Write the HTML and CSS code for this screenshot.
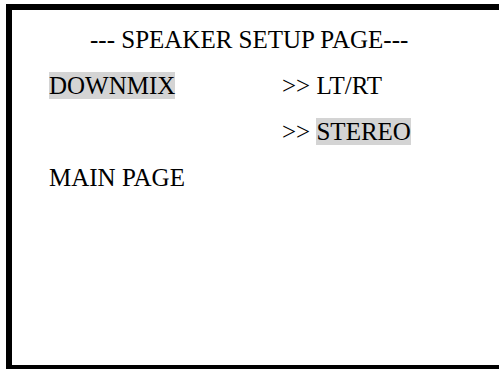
FILE: index.html
```html
<!DOCTYPE html>
<html lang="en">
<head>
    <meta charset="UTF-8">
    <meta name="viewport" content="width=device-width, initial-scale=1.0">
    <title>Speaker Setup Page</title>
    <link rel="stylesheet" href="styles.css">
</head>
<body>
    <div class="screen">
        <div class="menu">
            <div class="title">--- SPEAKER SETUP PAGE---</div>

            <div class="item"><span class="selected">DOWNMIX</span></div>
            <div class="option">&gt;&gt; LT/RT</div>

            <div class="item"></div>
            <div class="option">&gt;&gt; <span class="selected">STEREO</span></div>

            <div class="item">MAIN PAGE</div>
        </div>
    </div>
</body>
</html>
```

FILE: styles.css
```css
body {
    margin: 0;
    overflow: hidden;
    background-color: #fff;
    font-family: "Liberation Serif", "Times New Roman", serif;
    color: #000;
}

/* the OSD frame runs off the right and bottom of the window */
.screen {
    margin: 4px 0 0 6px;
    height: 365px;
    box-sizing: border-box;
    border-style: solid;
    border-color: #000;
    border-width: 6px 0 4px 6px;
    padding: 7px 0 0 37px;
}

.menu {
    display: grid;
    grid-template-columns: 233px auto;
    font-size: 25px;
    line-height: 46px;
}

.title {
    grid-column: 1 / -1;
    padding-left: 41px;
}

.item {
    grid-column: 1;
}

.selected {
    background-color: #d4d4d4;
}
```
